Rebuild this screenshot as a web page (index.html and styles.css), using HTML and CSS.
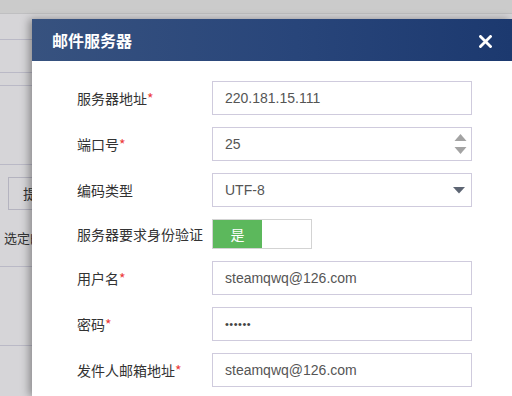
FILE: index.html
```html
<!DOCTYPE html>
<html lang="zh-CN">
<head>
    <meta charset="UTF-8">
    <title>邮件服务器</title>
    <link rel="stylesheet" href="styles.css">
</head>
<body>

    <!-- Page behind the dialog -->
    <div class="page">
        <div class="topbar"></div>
        <div class="bg-row r1"></div>
        <div class="bg-row r2"></div>
        <div class="bg-row r3"></div>
        <div class="bg-row r4"></div>
        <div class="bg-row r5">
            <div class="bg-btn">提交</div>
            <div class="bg-text">选定的</div>
        </div>
        <div class="bg-row r6"></div>
    </div>

    <!-- Dialog -->
    <div class="modal">
        <div class="modal-header">
            <span class="modal-title">邮件服务器</span>
            <span class="modal-close">
                <svg width="13" height="13" viewBox="0 0 13 13">
                    <path d="M1.5 1.5 L11.5 11.5 M11.5 1.5 L1.5 11.5" stroke="#fff" stroke-width="2.8" stroke-linecap="square"/>
                </svg>
            </span>
        </div>
        <div class="modal-body">
            <div class="form-row">
                <label>服务器地址<em>*</em></label>
                <div class="field">220.181.15.111</div>
            </div>
            <div class="form-row">
                <label>端口号<em>*</em></label>
                <div class="field">25
                    <span class="spin">
                        <svg width="13" height="24" viewBox="0 0 13 24">
                            <path d="M6.5 2 L12.5 9 L0.5 9 Z" fill="#a3a3a3"/>
                            <path d="M0.5 15 L12.5 15 L6.5 22 Z" fill="#a3a3a3"/>
                        </svg>
                    </span>
                </div>
            </div>
            <div class="form-row">
                <label>编码类型</label>
                <div class="field">UTF-8
                    <span class="caret">
                        <svg width="12" height="7" viewBox="0 0 12 7">
                            <path d="M0 0 L12 0 L6 6.5 Z" fill="#5d6573"/>
                        </svg>
                    </span>
                </div>
            </div>
            <div class="form-row">
                <label>服务器要求身份验证</label>
                <div class="toggle">
                    <span class="toggle-on">是</span>
                    <span class="toggle-off"></span>
                </div>
            </div>
            <div class="form-row">
                <label>用户名<em>*</em></label>
                <div class="field">steamqwq@126.com</div>
            </div>
            <div class="form-row">
                <label>密码<em>*</em></label>
                <div class="field pwd">••••••</div>
            </div>
            <div class="form-row">
                <label>发件人邮箱地址<em>*</em></label>
                <div class="field">steamqwq@126.com</div>
            </div>
        </div>
    </div>

</body>
</html>
```

FILE: styles.css
```css
body {
    margin: 0;
    padding: 0;
    width: 512px;
    height: 396px;
    overflow: hidden;
    position: relative;
    background-color: #d6d5d8;
    font-family: "Liberation Sans", "Noto Sans CJK SC", sans-serif;
    color: #333;
}
.page {
    height: 396px;
}
.topbar {
    height: 13px;
    background-color: #cbcbcb;
    border-bottom: 1px solid #bfbfc1;
}
.bg-row {
    display: flow-root;
    border-bottom: 1px solid #bab9c6;
}
.r1 { height: 25px; }
.r2 { height: 32px; }
.r3 { height: 12px; }
.r4 { height: 78px; }
.r5 { height: 101px; }
.r6 { height: 78px; }
.bg-btn {
    margin: 12px 0 0 8px;
    width: 60px;
    height: 33px;
    border: 1px solid #b4b3bf;
    box-sizing: border-box;
    line-height: 31px;
    padding-left: 14px;
    font-size: 14px;
    font-family: "Noto Sans CJK SC", sans-serif;
    color: #333;
}
.bg-text {
    margin: 18px 0 0 4px;
    font-size: 13px;
    font-family: "Noto Sans CJK SC", sans-serif;
    color: #333;
}
.modal {
    position: absolute;
    left: 32px;
    top: 19px;
    width: 480px;
    height: 377px;
    background-color: #fff;
    box-shadow: -3px 0 8px rgba(0, 0, 0, 0.35);
}
.modal-header {
    height: 42px;
    background: linear-gradient(to right, #37527f, #28457a 55%, #1c396f);
    display: flex;
    align-items: center;
    justify-content: space-between;
    padding: 0 20px 0 20px;
    box-sizing: border-box;
}
.modal-title {
    color: #fff;
    font-size: 16px;
    font-weight: bold;
    font-family: "Noto Sans CJK SC", sans-serif;
}
.modal-close {
    width: 13px;
    height: 13px;
    margin: 2px 0 0 0;
    line-height: 0;
}
.modal-body {
    padding: 20px 0 0 45px;
}
.form-row {
    display: flex;
    align-items: center;
    margin-bottom: 12px;
}
.form-row label {
    width: 135px;
    font-size: 14px;
    font-family: "Noto Sans CJK SC", sans-serif;
    color: #333;
}
.form-row label em {
    font-style: normal;
    color: #ec3a3a;
}
.field {
    position: relative;
    width: 260px;
    height: 34px;
    box-sizing: border-box;
    border: 1px solid #cfcbdd;
    padding: 0 12px;
    line-height: 32px;
    font-size: 14px;
    color: #555;
}
.field.pwd {
    font-size: 11px;
    letter-spacing: 0.5px;
    color: #444;
}
.spin {
    position: absolute;
    right: 4px;
    top: 4px;
    line-height: 0;
}
.caret {
    position: absolute;
    right: 6px;
    top: 13px;
    line-height: 0;
}
.toggle {
    display: flex;
    width: 100px;
    height: 30px;
    box-sizing: border-box;
    border: 1px solid #d3d3d3;
}
.toggle-on {
    width: 49px;
    background-color: #5cb85c;
    color: #fff;
    text-align: center;
    line-height: 28px;
    font-size: 14px;
    font-family: "Noto Sans CJK SC", sans-serif;
}
.toggle-off {
    flex: 1;
    background-color: #fff;
}
```
